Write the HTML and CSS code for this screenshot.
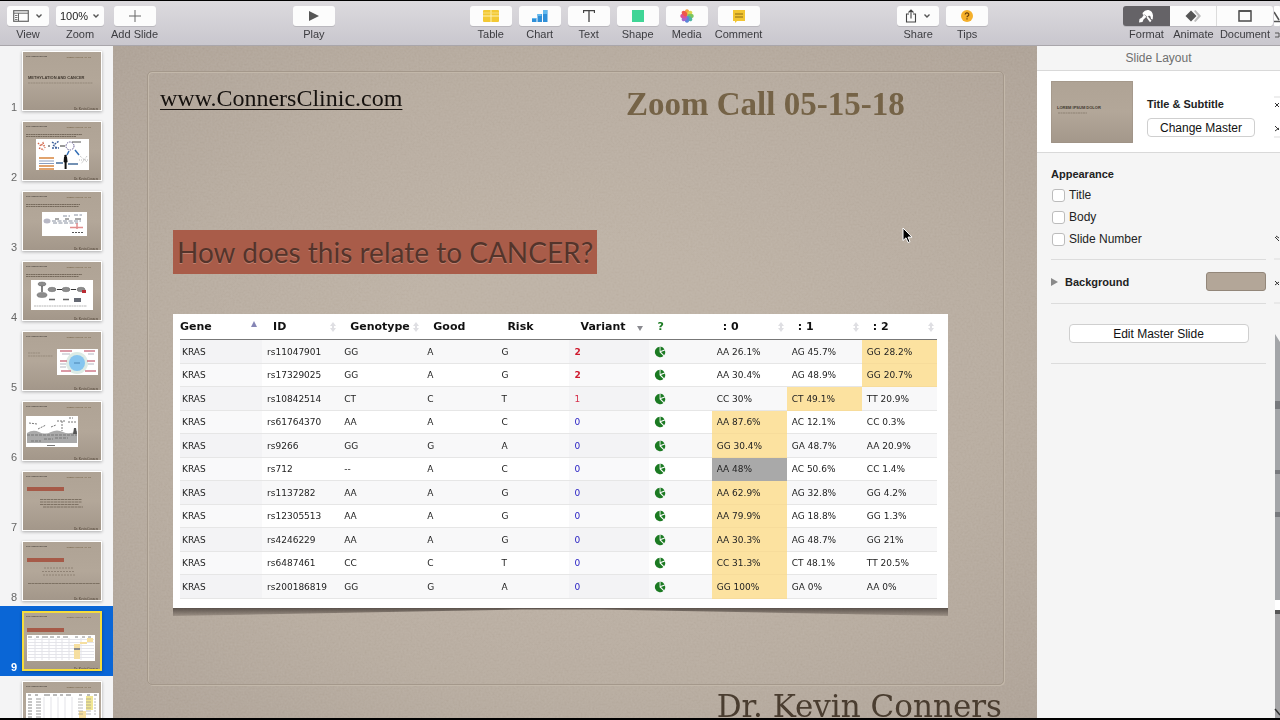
FILE: index.html
```html
<!DOCTYPE html>
<html lang="en">
<head>
  <meta charset="UTF-8" />
  <meta name="viewport" content="width=device-width, initial-scale=1.0"/>
  <title>Keynote - Zoom Call 05-15-18</title>
  <link rel="stylesheet" href="styles.css">
</head>
<body>
  <!-- Shared drawings -->
  <svg class="defs" width="0" height="0" aria-hidden="true">
    <defs>
      <linearGradient id="paper" x1="0" y1="0" x2="0" y2="1">
        <stop offset="0" stop-color="#afa395"/><stop offset="0.5" stop-color="#b3a799"/><stop offset="1" stop-color="#a3978a"/>
      </linearGradient>
      <filter id="grain" x="0" y="0" width="100%" height="100%">
        <feTurbulence type="fractalNoise" baseFrequency="0.5" numOctaves="3" seed="4"/>
        <feColorMatrix type="saturate" values="0"/>
        <feComponentTransfer><feFuncA type="linear" slope="0" intercept="1"/></feComponentTransfer>
      </filter>
      <symbol id="base" viewBox="0 0 80 60">
        <rect width="80" height="60" fill="#fff"/>
        <rect x="1" y="1" width="78" height="58" fill="url(#paper)"/>
        <g font-family="Liberation Serif, serif">
          <text x="4" y="6.400" font-size="2.100" fill="#15110e">www.ConnersClinic.com</text>
          <text x="44.500" y="6.700" font-size="2.900" font-weight="bold" fill="#756347">Zoom Call 05-15-18</text>
          <text x="52" y="58.800" font-size="3.200" fill="#4a3d30">Dr. Kevin Conners</text>
        </g>
      </symbol>
      <symbol id="caret" viewBox="0 0 8 6"><path d="M1.500 1.500L4 4l2.500-2.500" fill="none" stroke="#555" stroke-width="1.400"/></symbol>
      <symbol id="pie" viewBox="0 0 12 12">
        <path d="M5.600 6.200V.8A5.200 5.200 0 1 0 9.400 10z" fill="#1b7a22"/>
        <path d="M6.500 5V.6A5 5 0 0 1 10.500 3.600z" fill="#1b7a22"/>
        <path d="M7 5.900l4-1.500a5 5 0 0 1-.8 4.800z" fill="#1b7a22"/>
      </symbol>
      <symbol id="sort" viewBox="0 0 6 10"><path d="M3 0l3 4H4v2h2L3 10 0 6h2V4H0z" fill="#dfdfe3"/></symbol>
    </defs>
  </svg>

  <div class="toolbar">
    <div class="group">
      <button class="tool">
        <span class="face">
          <svg width="16" height="12" viewBox="0 0 16 12"><rect x=".7" y=".7" width="14.600" height="10.600" fill="none" stroke="#666" stroke-width="1.200"/><path d="M1 3.200h14M5.500 3.200V11" stroke="#666"/><path d="M2 5.500h2.500M2 7.500h2.500M2 9.500h2.500" stroke="#777"/></svg>
          <svg width="8" height="6"><use href="#caret"/></svg>
        </span>View
      </button>
      <div class="tool">
        <span class="face wide">
          <select id="zoom"><option>100%</option></select>
          <svg width="8" height="6"><use href="#caret"/></svg>
        </span><label for="zoom">Zoom</label>
      </div>
      <button class="tool">
        <span class="face"><svg width="12" height="12" viewBox="0 0 12 12"><path d="M6 0v12M0 6h12" stroke="#666" stroke-width="1"/></svg></span>Add Slide
      </button>
    </div>
    <div class="group">
      <button class="tool">
        <span class="face"><svg width="11" height="10" viewBox="0 0 11 10"><path d="M1 0l10 5L1 10z" fill="#555"/></svg></span>Play
      </button>
    </div>
    <div class="group">
      <button class="tool">
        <span class="face"><svg width="16" height="12" viewBox="0 0 16 12"><rect width="16" height="12" rx="1" fill="#f3c934"/><path d="M0 6h16M8 0v12" stroke="#fdf2b8"/><path d="M0 3h16" stroke="#f8de7a"/></svg></span>Table
      </button>
      <button class="tool">
        <span class="face"><svg width="16" height="12" viewBox="0 0 16 12"><path d="M0 8h4.500v4H0zM5.500 4H10v8H5.500zM11 0h4.500v12H11z" fill="#2f8fd8"/><path d="M0 8h4v1H0zM5.500 4h4v2h-4zM11 0h4v4h-4z" fill="#62b9ee"/></svg></span>Chart
      </button>
      <button class="tool">
        <span class="face"><svg width="12" height="12" viewBox="0 0 12 12"><path d="M.5 3V.7h11V3M6 .7V12" fill="none" stroke="#444" stroke-width="1.300"/></svg></span>Text
      </button>
      <button class="tool">
        <span class="face"><svg width="12" height="12" viewBox="0 0 12 12"><rect width="12" height="12" fill="#3fd596"/></svg></span>Shape
      </button>
      <button class="tool">
        <span class="face"><svg width="14" height="14" viewBox="0 0 14 14">
          <g opacity="0.9"><ellipse cx="7" cy="3.500" rx="2.200" ry="3.200" fill="#f49a2c"/>
          <ellipse cx="7" cy="3.500" rx="2.200" ry="3.200" fill="#d9d13c" transform="rotate(45 7 7)"/>
          <ellipse cx="7" cy="3.500" rx="2.200" ry="3.200" fill="#6fc04d" transform="rotate(90 7 7)"/>
          <ellipse cx="7" cy="3.500" rx="2.200" ry="3.200" fill="#3aae9a" transform="rotate(135 7 7)"/>
          <ellipse cx="7" cy="3.500" rx="2.200" ry="3.200" fill="#4b79d6" transform="rotate(180 7 7)"/>
          <ellipse cx="7" cy="3.500" rx="2.200" ry="3.200" fill="#9b58c8" transform="rotate(225 7 7)"/>
          <ellipse cx="7" cy="3.500" rx="2.200" ry="3.200" fill="#d9408f" transform="rotate(270 7 7)"/>
          <ellipse cx="7" cy="3.500" rx="2.200" ry="3.200" fill="#ee4638" transform="rotate(315 7 7)"/></g>
        </svg></span>Media
      </button>
      <button class="tool">
        <span class="face"><svg width="14" height="13" viewBox="0 0 14 13"><path d="M1 0h12v11H5l-2 2v-2H1z" fill="#f2c531"/><path d="M3 4h8M3 7h8" stroke="#8a6a17"/></svg></span>Comment
      </button>
    </div>
    <div class="group">
      <button class="tool">
        <span class="face">
          <svg width="12" height="14" viewBox="0 0 12 14"><path d="M4 5H1.500v8h9V5H8M6 9.500V1M3.500 3.500L6 1l2.500 2.500" fill="none" stroke="#444" stroke-width="1.100"/></svg>
          <svg width="8" height="6"><use href="#caret"/></svg>
        </span>Share
      </button>
      <button class="tool">
        <span class="face"><svg width="12" height="12" viewBox="0 0 12 12"><circle cx="6" cy="6" r="6" fill="#f5b02c"/><path d="M4.200 4.600a1.800 1.700 0 1 1 2.600 1.500q-.8.400-.8 1.200M6 8.200v1.300" fill="none" stroke="#6b3f0c" stroke-width="1.200"/></svg></span>Tips
      </button>
    </div>
    <div class="group segmented">
      <button class="tool active">
        <span class="face"><svg width="16" height="14" viewBox="0 0 16 14"><path d="M4.500 4Q7 .5 10.500 1q4 .8 4.500 5.500l-.3 4-1.700-.5-.5-2.500-1.500-1-1.500 1.500-3-2.500-1.500.5z" fill="#fff"/><path d="M6 5.500l2.500 2.300-3 2.700-1 2.500L1 13.500 1.500 10 4 8.500zM8.500 8.500l1.200-1.200 3.800 4.500-1.500 1.500z" fill="#fff"/></svg></span>Format
      </button>
      <button class="tool">
        <span class="face"><svg width="16" height="12" viewBox="0 0 16 12"><path d="M9 1l1.500-1 5.500 6-5.500 6L9 11l4-5z" fill="#bdbdbd"/><path d="M6 .5L11.500 6 6 11.500.5 6z" fill="#555"/></svg></span>Animate
      </button>
      <button class="tool last">
        <span class="face"><svg width="14" height="12" viewBox="0 0 14 12"><rect x="1" y="1" width="12" height="10" fill="none" stroke="#555" stroke-width="1.600"/><path d="M1 1h12" stroke="#555" stroke-width="2"/></svg></span>Document
      </button>
    </div>
    <svg class="edge-icon" width="6" height="36" viewBox="0 0 6 36"><rect width="6" height="20" rx="1" fill="#fff"/><path d="M0 6l5 8M0 15.500h6" stroke="#555" stroke-width="1.500"/><path d="M1 27h4v4H1" fill="none" stroke="#555"/></svg>
  </div>

  <div class="workspace">
    <!-- Slide navigator -->
    <ol class="navigator">
      <li><span>1</span>
        <svg viewBox="0 0 80 60"><use href="#base"/><text x="6" y="28" class="thumb-title">METHYLATION AND CANCER</text><path d="M6 32h65" stroke="#95897b" stroke-dasharray="2 .6"/></svg>
      </li>
      <li><span>2</span>
        <svg viewBox="0 0 80 60"><use href="#base"/><path d="M4 13.500h56M4 15.500h50" stroke="#766a5c" stroke-dasharray="2 .4"/><rect x="14" y="18" width="53" height="31" fill="#fff"/>
          <path d="M16 22l3 3 2-3 2 5M17 27l5 2" stroke="#d2694c" stroke-width="1.500" fill="none" stroke-dasharray="1.500 1"/>
          <path d="M26 25h2M38 25h5" stroke="#333"/><path d="M30 21l3 2 4-3M30 27h7M31 24l4 3" stroke="#3c5f9a" stroke-width="1.400" fill="none" stroke-dasharray="2 1"/>
          <circle cx="48" cy="25" r="4" fill="none" stroke="#5e548e" stroke-dasharray="1.500 1"/><path d="M50 21h9" stroke="#555"/>
          <path d="M47 30l-2 4M53 29l4 5" stroke="#336fb6" stroke-width="1.500"/>
          <circle cx="43.500" cy="35" r="1.300" fill="#111"/><path d="M42 36h3l.6 5-1 .5V48h-2v-6.500l-1-.5z" fill="#111"/>
          <path d="M17 37h15M17 45h15M17 48h15" stroke="#e1a36d" stroke-width="2"/><path d="M17 40h15M17 42.500h15" stroke="#8b9dbd"/>
          <path d="M34 42h7M46 43h10" stroke="#456d9c" stroke-width="1.300"/><path d="M58 35l7 6M65 35l-6 8M57 39h9" stroke="#bbb" stroke-dasharray="1 1"/></svg>
      </li>
      <li><span>3</span>
        <svg viewBox="0 0 80 60"><use href="#base"/><path d="M4 13.500h54M4 15.500h53" stroke="#766a5c" stroke-dasharray="2 .4"/><rect x="20" y="21" width="45" height="24" fill="#fff"/>
          <ellipse cx="25" cy="30" rx="3.500" ry="2.500" fill="#b8b8c5"/><path d="M30 30h29M31 32h25M41 25h7M52 24h8" stroke="#8890a0" stroke-dasharray="4 1.500"/><path d="M33 28h4M43 28h4M53 28h6" stroke="#555"/><path d="M48 36.500h13M55 32v6" stroke="#e28d8d" stroke-width="1.500"/><path d="M50 41.500h12" stroke="#555" stroke-dasharray="2 1"/></svg>
      </li>
      <li><span>4</span>
        <svg viewBox="0 0 80 60"><use href="#base"/><path d="M4 13.500h56M4 15.500h53" stroke="#766a5c" stroke-dasharray="2 .4"/><rect x="9" y="19" width="62" height="30" fill="#fff"/>
          <g fill="#8d8d8d" stroke="#666" stroke-width=".5"><ellipse cx="20" cy="23" rx="4" ry="2"/><ellipse cx="20" cy="34" rx="5" ry="2.500"/><ellipse cx="30" cy="28.500" rx="4" ry="2.200"/><ellipse cx="44" cy="28.500" rx="4" ry="2.200"/><ellipse cx="59" cy="28.500" rx="4" ry="2.200"/></g>
          <path d="M20 25v6M35 28.500h5M49 28.500h5" stroke="#333" stroke-width="1.200"/><path d="M27 38.500h6M41 38.500h6" stroke="#666" stroke-width="1.500"/><rect x="52" y="37" width="7" height="4" fill="#666a74"/><rect x="60" y="29" width="4" height="3" fill="#b92b33"/><path d="M12 45h53" stroke="#999" stroke-width=".7" stroke-dasharray="2 .5"/></svg>
      </li>
      <li><span>5</span>
        <svg viewBox="0 0 80 60"><use href="#base"/><path d="M6 22h12M6 25h25" stroke="#978b7d" stroke-dasharray="2 .5"/><rect x="35" y="18" width="41" height="26" fill="#fff"/>
          <circle cx="55" cy="32" r="11" fill="#dcebe5"/><circle cx="55" cy="32" r="8" fill="#86c5ef"/><path d="M52 32h6" stroke="#4a86b5"/><path d="M38 20h12M62 20h11M38 30h7M65 30h8M39 40h10M63 40h11" stroke="#d07b8b" stroke-width="1.300"/><path d="M40 23h8M66 23h6M38 33h6M66 33h6M38 36h6" stroke="#9299a8" stroke-width=".7"/></svg>
      </li>
      <li><span>6</span>
        <svg viewBox="0 0 80 60"><use href="#base"/><rect x="4" y="15" width="52" height="31" fill="#fff"/>
          <path d="M5 32q6-4 12-1t12 0 12 0 14-1v12H5z" fill="#aaa"/><path d="M5 34h50M9 40h10M22 38h9M33 37h13" stroke="#777" stroke-dasharray="3 1"/><path d="M7 22l8 1M16 28l8-4M29 26l5-2M35 20h9M47 17h4M46 21h8M40 20v10" stroke="#777" stroke-dasharray="2 1"/><path d="M51 33l1-6h2l1 6z" fill="#555"/><path d="M25 44.500h8" stroke="#555" stroke-width=".8"/></svg>
      </li>
      <li><span>7</span>
        <svg viewBox="0 0 80 60"><use href="#base"/><rect x="5" y="16" width="37" height="4" fill="#a65a48"/><path d="M18 28.500h42M18 31h42M18 33.500h39M21 36h40" stroke="#7d7163" stroke-dasharray="3 .5"/></svg>
      </li>
      <li><span>8</span>
        <svg viewBox="0 0 80 60"><use href="#base"/><rect x="5" y="17" width="37" height="4" fill="#a65a48"/><path d="M22 27h29M20 30.500h32M21 34h32" stroke="#8f8275" stroke-dasharray="2 1"/><path d="M6 42.500h72" stroke="#7d7163" stroke-dasharray="3 .4"/></svg>
      </li>
      <li class="selected"><span>9</span>
        <svg viewBox="0 0 80 60"><use href="#base"/><rect x="5" y="17" width="37" height="4" fill="#a65a48"/><rect x="5" y="24" width="68" height="26" fill="#fff"/>
          <path d="M6 26h4M14 26h3M20 26h6M28 26h4M35 26h3M41 26h5M53 26h3M60 26h3M66 26h3" stroke="#888"/><path d="M6 28.500h66M6 31.500h66M6 34.500h66M6 37.500h66M6 40.500h66M6 43.500h66M6 46.500h66" stroke="#dedee4" stroke-width=".8"/><path d="M13 27v22M20 27v22M27 27v22M34 27v22M40 27v22M47 27v22M59 27v22" stroke="#e3e3e8"/><rect x="52" y="33" width="6" height="15" fill="#f6dfa0"/><rect x="52" y="37" width="6" height="2" fill="#8c8c8c"/><rect x="65" y="27" width="6" height="4" fill="#f6dfa0"/><rect x="58" y="31" width="7" height="2" fill="#f6dfa0"/><rect x="1" y="1" width="78" height="58" fill="none" stroke="#f5dc3c" stroke-width="2"/></svg>
      </li>
      <li><span></span>
        <svg viewBox="0 0 80 60"><use href="#base"/><rect x="4" y="12" width="73" height="47" fill="#fff"/>
          <path d="M6 14h3M13 14h3M22 14h6M31 14h4M38 14h3M44 14h5M57 14h3M65 14h3M72 14h3" stroke="#777"/><path d="M6 18h4M6 21h4M6 24h4M6 27h4M6 30h4M6 33h4M6 36h4" stroke="#888"/><path d="M14 18h5M14 21h5M14 24h5M14 27h5M14 30h5M14 33h5M14 36h5" stroke="#999"/><path d="M22 16v30M29 16v30M36 16v30M43 16v30M50 16v30" stroke="#e3e3e8"/><rect x="64" y="15" width="7" height="14" fill="#f1e693"/><rect x="57" y="30" width="7" height="18" fill="#f6dfa0"/><path d="M56 18h18M56 21h18M56 24h18M56 27h18M56 30h18M56 33h18" stroke="#888" stroke-opacity=".6" stroke-dasharray="5 3"/></svg>
      </li>
    </ol>

    <!-- Slide canvas -->
    <div class="slide">
      <svg class="texture" width="100%" height="100%" aria-hidden="true"><rect width="100%" height="100%" filter="url(#grain)"/></svg>
      <div class="frame"></div>
      <div class="slide-head">
        <a href="#">www.ConnersClinic.com</a>
        <h1>Zoom Call 05-15-18</h1>
      </div>
      <h2>How does this relate to CANCER?</h2>
      <div class="card">
        <table>
          <colgroup>
            <col class="c-gene"><col class="c-id"><col class="c-geno"><col class="c-good"><col class="c-risk"><col class="c-var"><col class="c-pie"><col class="c-freq"><col class="c-freq"><col class="c-freq">
          </colgroup>
          <thead>
            <tr>
              <th><div>Gene<svg class="up" width="6" height="6" viewBox="0 0 6 6"><path d="M3 0l3 6H0z" fill="#8585b5"/></svg></div></th>
              <th><div>ID<svg width="6" height="10"><use href="#sort"/></svg></div></th>
              <th><div>Genotype<svg width="6" height="10"><use href="#sort"/></svg></div></th>
              <th>Good</th>
              <th>Risk</th>
              <th><div>Variant<svg class="down" width="6" height="5" viewBox="0 0 6 5"><path d="M0 0h6L3 5z" fill="#8a8a90"/></svg></div></th>
              <th class="help">?</th>
              <th><div>: 0<svg width="6" height="10"><use href="#sort"/></svg></div></th>
              <th><div>: 1<svg width="6" height="10"><use href="#sort"/></svg></div></th>
              <th><div>: 2<svg width="6" height="10"><use href="#sort"/></svg></div></th>
            </tr>
          </thead>
          <tbody>
            <tr><td>KRAS</td><td>rs11047901</td><td>GG</td><td>A</td><td>G</td><td class="two">2</td><td><svg width="12" height="12"><use href="#pie"/></svg></td><td>AA 26.1%</td><td>AG 45.7%</td><td class="hit">GG 28.2%</td></tr>
            <tr><td>KRAS</td><td>rs17329025</td><td>GG</td><td>A</td><td>G</td><td class="two">2</td><td><svg width="12" height="12"><use href="#pie"/></svg></td><td>AA 30.4%</td><td>AG 48.9%</td><td class="hit">GG 20.7%</td></tr>
            <tr><td>KRAS</td><td>rs10842514</td><td>CT</td><td>C</td><td>T</td><td class="one">1</td><td><svg width="12" height="12"><use href="#pie"/></svg></td><td>CC 30%</td><td class="hit">CT 49.1%</td><td>TT 20.9%</td></tr>
            <tr><td>KRAS</td><td>rs61764370</td><td>AA</td><td>A</td><td>C</td><td class="zero">0</td><td><svg width="12" height="12"><use href="#pie"/></svg></td><td class="hit">AA 87.6%</td><td>AC 12.1%</td><td>CC 0.3%</td></tr>
            <tr><td>KRAS</td><td>rs9266</td><td>GG</td><td>G</td><td>A</td><td class="zero">0</td><td><svg width="12" height="12"><use href="#pie"/></svg></td><td class="hit">GG 30.4%</td><td>GA 48.7%</td><td>AA 20.9%</td></tr>
            <tr><td>KRAS</td><td>rs712</td><td>--</td><td>A</td><td>C</td><td class="zero">0</td><td><svg width="12" height="12"><use href="#pie"/></svg></td><td class="none">AA 48%</td><td>AC 50.6%</td><td>CC 1.4%</td></tr>
            <tr><td>KRAS</td><td>rs1137282</td><td>AA</td><td>A</td><td>G</td><td class="zero">0</td><td><svg width="12" height="12"><use href="#pie"/></svg></td><td class="hit">AA 62.9%</td><td>AG 32.8%</td><td>GG 4.2%</td></tr>
            <tr><td>KRAS</td><td>rs12305513</td><td>AA</td><td>A</td><td>G</td><td class="zero">0</td><td><svg width="12" height="12"><use href="#pie"/></svg></td><td class="hit">AA 79.9%</td><td>AG 18.8%</td><td>GG 1.3%</td></tr>
            <tr><td>KRAS</td><td>rs4246229</td><td>AA</td><td>A</td><td>G</td><td class="zero">0</td><td><svg width="12" height="12"><use href="#pie"/></svg></td><td class="hit">AA 30.3%</td><td>AG 48.7%</td><td>GG 21%</td></tr>
            <tr><td>KRAS</td><td>rs6487461</td><td>CC</td><td>C</td><td>T</td><td class="zero">0</td><td><svg width="12" height="12"><use href="#pie"/></svg></td><td class="hit">CC 31.3%</td><td>CT 48.1%</td><td>TT 20.5%</td></tr>
            <tr><td>KRAS</td><td>rs200186819</td><td>GG</td><td>G</td><td>A</td><td class="zero">0</td><td><svg width="12" height="12"><use href="#pie"/></svg></td><td class="hit">GG 100%</td><td>GA 0%</td><td>AA 0%</td></tr>
          </tbody>
        </table>
      </div>
      <p class="author">Dr. Kevin Conners</p>
      <svg class="cursor" width="11" height="17" viewBox="0 0 11 17"><path d="M1 1v12.500l3-2.700 2 4.700 2-.9-2-4.500h4z" fill="#000" stroke="#fff"/></svg>
    </div>

    <!-- Format inspector -->
    <div class="inspector">
      <div class="inspector-title">Slide Layout</div>
      <div class="master">
        <svg class="master-thumb" viewBox="0 0 82 62"><rect width="82" height="62" rx="1" fill="url(#paper)" stroke="#9b8f82"/><text x="6" y="28" class="thumb-title">LOREM IPSUM DOLOR</text><path d="M7 32h29" stroke="#8d8173" stroke-dasharray="2 .5"/></svg>
        <div class="master-info">
          <h3>Title &amp; Subtitle</h3>
          <button class="push">Change Master</button>
        </div>
      </div>
      <div class="section appearance">
        <h3>Appearance</h3>
        <label><input type="checkbox">Title</label>
        <label><input type="checkbox">Body</label>
        <label><input type="checkbox">Slide Number</label>
      </div>
      <div class="section background">
        <svg width="7" height="8" viewBox="0 0 7 8"><path d="M0 0l7 4-7 4z" fill="#8a8a8a"/></svg>
        <h3>Background</h3>
        <button class="swatch" aria-label="Background colour"></button>
      </div>
      <div class="section edit">
        <button class="push">Edit Master Slide</button>
      </div>
      <svg class="edge" width="6" height="672" viewBox="0 0 6 672" aria-hidden="true">
        <path d="M1 57l4 4M1 61l4-4M1 80l4 4M1 85l4-3M1 191l4 4M2 190l3 2M1 235l4 4M1 239l4-3" stroke="#333"/>
        <path d="M0 51h6M0 91h6M0 213h6M0 257h6" stroke="#ddd"/>
        <path d="M1 288l5 8v258H1z" fill="#a3a5a8"/>
        <path d="M1 355h5v8H1zM1 424h5v4H1zM1 466h5v5H1z" fill="#77797d"/>
        <path d="M1 554h5v10H1z" fill="#fff"/>
        <path d="M1 564h5v108H1z" fill="#a5a5a7"/><path d="M1 564h5v4H1z" fill="#555"/>
        <path d="M1 663l5 6" stroke="#333" stroke-width="1.500"/>
      </svg>
    </div>
  </div>
</body>
</html>
```

FILE: styles.css
```css
* {
  box-sizing: border-box;
}
body {
  margin: 0;
  height: 100vh;
  display: flex;
  flex-direction: column;
  border-top: 1px solid #000;
  border-bottom: 2px solid #000;
  overflow: hidden;
  font-family: "Liberation Sans", Arial, sans-serif;
  font-size: 12px;
  color: #222;
  background: #f5f5f5;
}
h1, h2, h3, p {
  margin: 0;
}
button, select {
  font: inherit;
  color: inherit;
  border: none;
  background: none;
  padding: 0;
}
svg {
  display: block;
  flex: none;
}
.defs {
  position: absolute;
}

/* Toolbar */
.toolbar {
  position: relative;
  display: flex;
  justify-content: space-between;
  height: 45px;
  padding: 5px 7px 0;
  background: linear-gradient(#dcdade, #c9c7ce);
  border-bottom: 1px solid #a9a6ab;
}
.group {
  display: flex;
  gap: 7px;
}
.tool {
  display: flex;
  flex-direction: column;
  align-items: center;
  font-size: 11px;
  line-height: 16px;
  color: #3c3c40;
}
.face {
  display: flex;
  align-items: center;
  justify-content: center;
  gap: 6px;
  width: 42px;
  height: 20px;
  background: #fcfcfc;
  border-radius: 3px;
  box-shadow: 0 1px 0 #bab8be;
}
.face.wide {
  width: 48px;
  gap: 4px;
}
.face select {
  appearance: none;
  width: 28px;
  color: #222;
}
.segmented {
  gap: 0;
}
.segmented .face {
  width: 47px;
  border-radius: 0;
  border-right: 1px solid #dcdcdc;
}
.segmented .active .face {
  background: #656367;
  border-color: #656367;
  border-radius: 3px 0 0 3px;
}
.segmented .last .face {
  width: 56px;
  border-right: none;
  border-radius: 0 3px 3px 0;
}
.edge-icon {
  position: absolute;
  right: 0;
  top: 5px;
}

/* Slide navigator */
.workspace {
  flex: 1;
  min-height: 0;
  display: flex;
}
.navigator {
  width: 113px;
  flex: none;
  margin: 0;
  padding: 0;
  list-style: none;
  overflow: hidden;
  background: #f4f4f5;
}
.navigator li {
  display: flex;
  align-items: flex-end;
  gap: 5px;
  height: 70px;
  padding: 5px 0;
}
.navigator span {
  width: 17px;
  text-align: right;
  font-size: 11px;
  line-height: 8px;
  color: #666;
}
.navigator svg {
  width: 80px;
  height: 60px;
  box-shadow: 0 1px 3px rgba(0, 0, 0, 0.3);
}
.navigator .selected {
  background: #0a66d6;
}
.navigator .selected span {
  color: #fff;
  font-weight: bold;
}
.thumb-title {
  font-family: "Liberation Sans", Arial, sans-serif;
  font-size: 4px;
  font-weight: bold;
  fill: #40382f;
}

/* Slide canvas */
.slide {
  position: relative;
  flex: 1;
  overflow: hidden;
  background: radial-gradient(ellipse at center, #bbafa2 30%, #b5a99c 65%, #ab9f93 100%);
}
.texture {
  position: absolute;
  inset: 0;
  opacity: 0.12;
  mix-blend-mode: overlay;
}
.frame {
  position: absolute;
  inset: 25px 33px 33px 34px;
  border: 1px solid #a4988b;
  border-radius: 5px;
  box-shadow: 1px 1px 0 #c3b8aa, inset 1px 1px 0 #c3b8aa;
}
.slide-head {
  position: relative;
  display: grid;
  grid-template-columns: 466px 1fr;
  align-items: start;
  padding: 38px 0 0 47px;
  font-family: "Liberation Serif", "Times New Roman", serif;
}
.slide-head a {
  font-size: 24px;
  line-height: 28px;
  color: #15110e;
  text-decoration-thickness: 1px;
  text-underline-offset: 3px;
}
.slide-head h1 {
  font-size: 33px;
  line-height: 40px;
  color: #756347;
}
.slide h2 {
  position: relative;
  width: fit-content;
  margin: 106px 0 0 60px;
  padding: 0 4px;
  background: #a95c49;
  color: #54342b;
  font-family: Lato, sans-serif;
  font-size: 28px;
  font-weight: normal;
  line-height: 44px;
  text-shadow: 0 1px 0 #c08170;
}
.card {
  position: relative;
  margin: 40px 89px 0 60px;
  padding: 0 11px 9px 7px;
  background: #fff;
  font-family: "DejaVu Sans", Verdana, sans-serif;
}
.card::after {
  content: "";
  position: absolute;
  left: 0;
  right: 0;
  top: 100%;
  height: 8px;
  background: linear-gradient(rgba(50, 42, 38, 0.7), rgba(80, 68, 60, 0.25));
  clip-path: polygon(0 0, 100% 0, 100% 100%, 55% 20%, 45% 20%, 0 100%);
}
table {
  width: 100%;
  table-layout: fixed;
  border-collapse: separate;
  border-spacing: 0;
}
.c-gene { width: 82px; }
.c-id { width: 77px; }
.c-geno { width: 83px; }
.c-good { width: 74px; }
.c-risk { width: 73px; }
.c-var { width: 79px; }
.c-pie { width: 63px; }
.c-freq { width: 75px; }
th {
  height: 26px;
  padding: 0 3px 0 11px;
  border-bottom: 1px solid #777;
  font-size: 11px;
  text-align: left;
  color: #111;
}
th:first-child {
  padding: 0 5px 0 0;
}
th div {
  display: flex;
  align-items: center;
  justify-content: space-between;
}
th .up {
  margin-bottom: 6px;
}
th .down {
  margin: 3px 3px 0 0;
}
th.help {
  padding-left: 9px;
  color: #1b7a22;
}
td {
  height: 23px;
  padding: 0 5px;
  border-bottom: 1px solid #e6e6e6;
  font-size: 9px;
  white-space: nowrap;
  color: #222;
}
td:first-child {
  padding-left: 2px;
}
tbody tr:nth-child(odd) td {
  height: 24px;
  background: #f8f8f9;
}
tbody td:nth-child(1), tbody td:nth-child(6) {
  background: #f9f9fa;
}
tbody tr:nth-child(odd) td:nth-child(1), tbody tr:nth-child(odd) td:nth-child(6) {
  background: #f3f3f5;
}
tbody tr td.hit, tbody tr:nth-child(odd) td.hit {
  background: #fce2a0;
  border-color: #f7dc9b;
}
tbody tr td.none {
  background: #a9a9a9;
  border-color: #a9a9a9;
}
td.two {
  color: #cf1a2e;
  font-weight: bold;
}
td.one {
  color: #d6304c;
}
td.zero {
  color: #2a22c4;
}
.author {
  position: relative;
  margin-top: 86px;
  padding-right: 35px;
  text-align: right;
  font-family: "DejaVu Serif", serif;
  font-size: 31px;
  line-height: 24px;
  color: #4a3d30;
}
.cursor {
  position: absolute;
  left: 789px;
  top: 181px;
}

/* Inspector */
.inspector {
  position: relative;
  width: 243px;
  flex: none;
  background: #f5f5f5;
}
.inspector-title {
  height: 25px;
  line-height: 24px;
  text-align: center;
  color: #6f6f6f;
  border-bottom: 1px solid #d9d9d9;
}
.inspector h3 {
  font-size: 11px;
  line-height: 16px;
}
.master {
  display: flex;
  align-items: center;
  gap: 14px;
  height: 82px;
  padding-left: 14px;
  background: #fff;
  border-bottom: 1px solid #d9d9d9;
}
.master-thumb {
  width: 82px;
  height: 62px;
}
.master-info {
  padding-top: 10px;
}
.master h3 {
  margin-bottom: 6px;
}
.push {
  width: 108px;
  height: 19px;
  border: 1px solid #cfcfcf;
  border-radius: 4px;
  background: #fff;
  font-size: 12px;
  line-height: 16px;
  color: #111;
}
.section {
  margin: 0 14px;
  border-bottom: 1px solid #dcdcdc;
}
.appearance {
  height: 107px;
  padding-top: 13px;
}
.appearance label {
  display: flex;
  align-items: center;
  gap: 4px;
  height: 22px;
}
.appearance h3 {
  margin-bottom: 2px;
}
.appearance input {
  appearance: none;
  width: 13px;
  height: 13px;
  margin: 0 0 0 1px;
  border: 1px solid #bcbcbc;
  border-radius: 3px;
  background: #fff;
}
.background {
  display: flex;
  align-items: center;
  gap: 7px;
  height: 44px;
}
.swatch {
  width: 60px;
  height: 19px;
  margin-left: auto;
  border: 1px solid #93877a;
  border-radius: 3px;
  background: #b3a698;
}
.edit {
  display: flex;
  justify-content: center;
  height: 60px;
  padding-top: 20px;
}
.edit .push {
  width: 180px;
}
.edge {
  position: absolute;
  right: 0;
  top: 0;
}
```
